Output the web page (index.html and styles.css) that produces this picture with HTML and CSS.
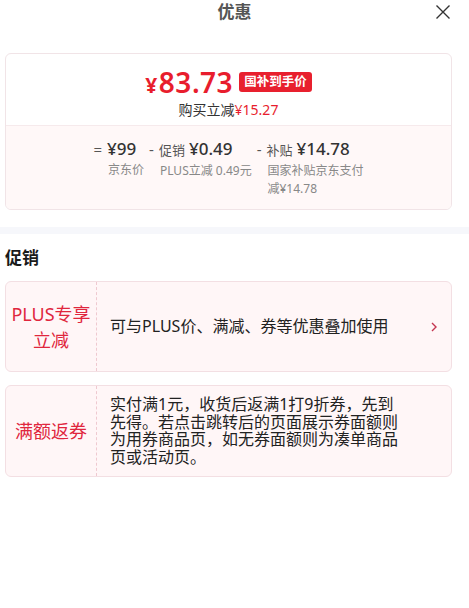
FILE: index.html
```html
<!DOCTYPE html>
<html lang="zh-CN">
<head>
    <meta charset="UTF-8">
    <meta name="viewport" content="width=device-width, initial-scale=1.0">
    <title>优惠</title>
    <link rel="stylesheet" href="styles.css">
</head>
<body>
    <div class="header">
        <span class="title">优惠</span>
        <svg class="close" width="16" height="16" viewBox="0 0 16 16">
            <path d="M1.5 1.5 L14.5 14.5 M14.5 1.5 L1.5 14.5" stroke="#333" stroke-width="1.4" fill="none"/>
        </svg>
    </div>

    <div class="wrap">
        <div class="price-card">
            <div class="price-top">
                <div class="price-line">
                    <span class="price"><span class="yen">¥</span>83.73</span>
                    <span class="badge">国补到手价</span>
                </div>
                <div class="saving">购买立减<span class="red">¥15.27</span></div>
            </div>
            <div class="price-bottom">
                <div class="calc">
                    <div class="op">=</div>
                    <div class="calc-body">
                        <div class="calc-val">¥99</div>
                        <div class="calc-desc">京东价</div>
                    </div>
                </div>
                <div class="calc">
                    <div class="op">-</div>
                    <div class="calc-body">
                        <div class="calc-val"><span class="calc-name">促销</span>¥0.49</div>
                        <div class="calc-desc">PLUS立减 0.49元</div>
                    </div>
                </div>
                <div class="calc">
                    <div class="op">-</div>
                    <div class="calc-body narrow">
                        <div class="calc-val"><span class="calc-name">补贴</span>¥14.78</div>
                        <div class="calc-desc">国家补贴京东支付减¥14.78</div>
                    </div>
                </div>
            </div>
        </div>
    </div>

    <div class="band"></div>

    <div class="wrap">
        <h2 class="section-title">促销</h2>

        <div class="promo">
            <div class="promo-tag">PLUS专享立减</div>
            <div class="promo-text">可与PLUS价、满减、券等优惠叠加使用</div>
            <svg class="arrow" width="6" height="10" viewBox="0 0 6 10">
                <path d="M1 1 L5 5 L1 9" stroke="#c43650" stroke-width="1.4" fill="none"/>
            </svg>
        </div>

        <div class="promo">
            <div class="promo-tag">满额返券</div>
            <div class="promo-text">实付满1元，收货后返满1打9折券，先到先得。若点击跳转后的页面展示券面额则为用券商品页，如无券面额则为凑单商品页或活动页。</div>
        </div>
    </div>
</body>
</html>
```

FILE: styles.css
```css
body {
    margin: 0;
    background-color: #fff;
    font-family: "Noto Sans", "Noto Sans CJK SC", sans-serif;
    color: #222;
}
.header {
    height: 24px;
    display: flex;
    align-items: center;
    justify-content: center;
    position: relative;
}
.title {
    font-size: 17px;
    font-weight: bold;
    color: #555;
    line-height: 24px;
}
.close {
    position: absolute;
    right: 18px;
    top: 4px;
}
.wrap {
    padding: 0 17px 0 5px;
}
.price-card {
    margin-top: 29px;
    border: 1px solid #f1e4e7;
    border-radius: 6px;
    overflow: hidden;
}
.price-top {
    padding: 10px 0 5px;
    text-align: center;
}
.price-line {
    height: 36px;
    display: flex;
    align-items: center;
    justify-content: center;
    gap: 6px;
}
.price {
    color: #e81d2d;
    font-size: 28px;
    font-weight: 600;
    letter-spacing: 0.5px;
}
.yen {
    font-size: 21px;
    font-weight: bold;
    margin-right: 1px;
}
.badge {
    background-color: #e8202e;
    color: #fff;
    font-size: 12.5px;
    font-weight: bold;
    height: 20px;
    line-height: 20px;
    padding: 0 5px;
    border-radius: 3px;
}
.saving {
    font-size: 14px;
    line-height: 20px;
    color: #333;
}
.red {
    color: #e81d2d;
}
.price-bottom {
    border-top: 1px solid #f6eaec;
    background-color: #fff8f8;
    padding: 11px 0 11px;
    display: flex;
    justify-content: center;
    gap: 5px;
}
.calc {
    display: flex;
}
.op {
    font-size: 15px;
    line-height: 24px;
    color: #555;
    margin-right: 5px;
}
.calc-val {
    font-size: 17px;
    font-weight: 500;
    line-height: 24px;
    color: #333;
}
.calc-name {
    font-size: 13px;
    font-weight: normal;
    color: #555;
    margin-right: 4px;
}
.calc-desc {
    font-size: 12px;
    line-height: 18px;
    color: #888;
    padding-left: 1px;
}
.narrow {
    width: 97px;
}
.band {
    margin-top: 17px;
    height: 7px;
    background-color: #f6f7fb;
}
.section-title {
    margin: 12px 0 11px;
    font-size: 17px;
    line-height: 24px;
    font-weight: bold;
    color: #1a1a1a;
}
.promo {
    display: flex;
    align-items: stretch;
    min-height: 89px;
    background-color: #fff6f7;
    border: 1px solid #f3dfe3;
    border-radius: 6px;
    margin-bottom: 13px;
    position: relative;
}
.promo-tag {
    width: 80px;
    flex-shrink: 0;
    padding: 0 5px;
    display: flex;
    align-items: center;
    justify-content: center;
    text-align: center;
    border-right: 1px dashed #efc9d0;
    color: #e0263d;
    font-size: 18px;
    line-height: 26px;
}
.promo-text {
    width: 292px;
    padding: 10px 0 10px 13px;
    display: flex;
    align-items: center;
    font-size: 16px;
    line-height: 17.5px;
    color: #222;
}
.arrow {
    position: absolute;
    right: 14px;
    top: 50%;
    margin-top: -5px;
}
```
